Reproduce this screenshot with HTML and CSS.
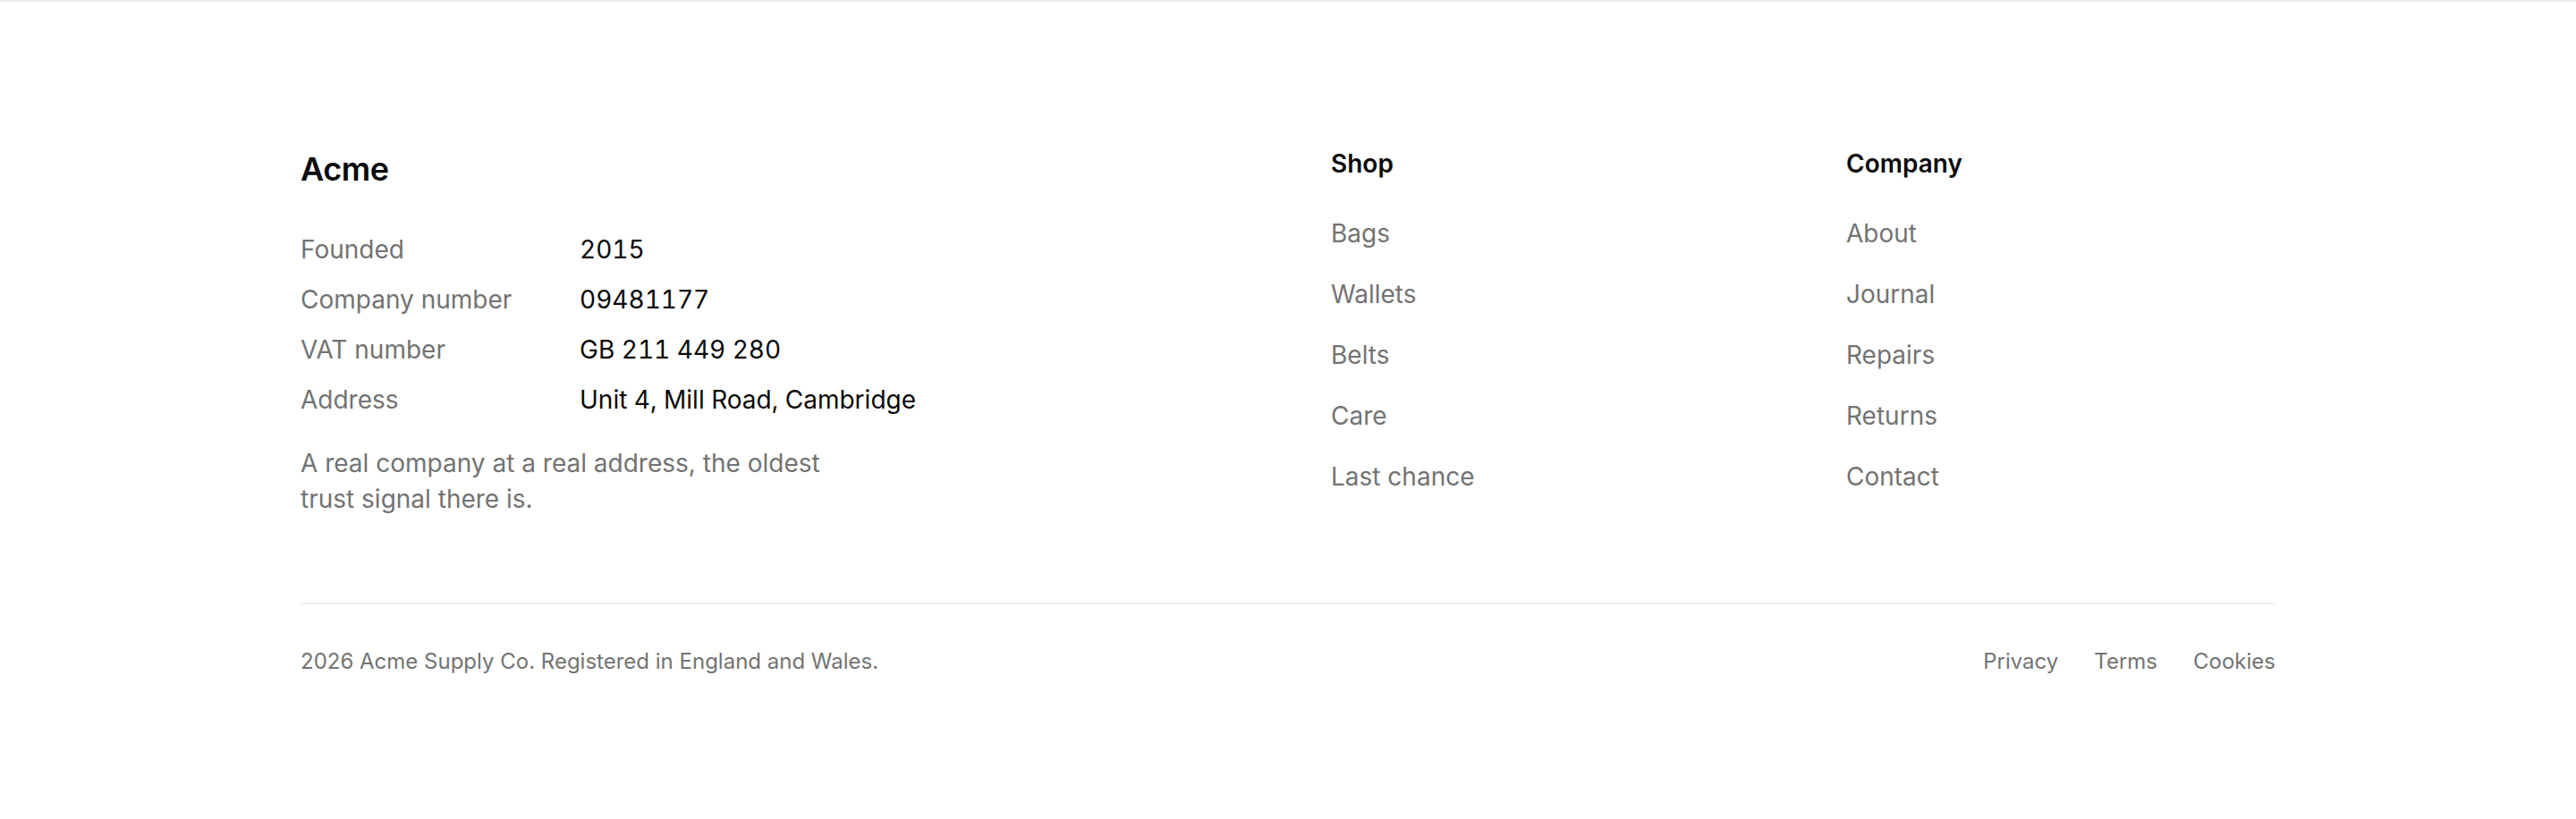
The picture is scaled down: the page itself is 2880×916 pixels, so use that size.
FILE: index.html
```html
<!DOCTYPE html>
<html lang="en">
<head>
<meta charset="utf-8">
<title>Acme footer</title>
<link rel="stylesheet" href="styles.css">
</head>
<body>
<footer class="footer">
  <div class="container">
    <div class="cols">
      <div class="brand">
        <div class="brand-name">Acme</div>
        <dl class="facts">
          <div class="fact"><dt>Founded</dt><dd>2015</dd></div>
          <div class="fact"><dt>Company number</dt><dd>09481177</dd></div>
          <div class="fact"><dt>VAT number</dt><dd>GB 211 449 280</dd></div>
          <div class="fact"><dt>Address</dt><dd>Unit 4, Mill Road, Cambridge</dd></div>
        </dl>
        <p class="blurb">A real company at a real address, the oldest trust signal there is.</p>
      </div>
      <nav class="linkcol">
        <h3 class="col-title">Shop</h3>
        <ul class="links">
          <li><a href="#">Bags</a></li>
          <li><a href="#">Wallets</a></li>
          <li><a href="#">Belts</a></li>
          <li><a href="#">Care</a></li>
          <li><a href="#">Last chance</a></li>
        </ul>
      </nav>
      <nav class="linkcol">
        <h3 class="col-title">Company</h3>
        <ul class="links">
          <li><a href="#">About</a></li>
          <li><a href="#">Journal</a></li>
          <li><a href="#">Repairs</a></li>
          <li><a href="#">Returns</a></li>
          <li><a href="#">Contact</a></li>
        </ul>
      </nav>
    </div>
    <div class="bottom">
      <p class="legal">2026 Acme Supply Co. Registered in England and Wales.</p>
      <div class="legal-links">
        <a href="#">Privacy</a>
        <a href="#">Terms</a>
        <a href="#">Cookies</a>
      </div>
    </div>
  </div>
</footer>
</body>
</html>
```

FILE: styles.css
```css
* { box-sizing: border-box; }

html, body {
  margin: 0;
  padding: 0;
  background: #ffffff;
}

body {
  font-family: Inter, "Noto Sans", "Liberation Sans", sans-serif;
  color: #0a0a0a;
}

.footer {
  border-top: 2px solid #ebebeb;
  padding: 160px 0 120px;
}

.container {
  max-width: 2400px;
  margin: 0 auto;
  padding: 0 96px;
}

.cols {
  display: grid;
  grid-template-columns: repeat(4, minmax(0, 1fr));
  column-gap: 96px;
}

.brand {
  grid-column: span 2;
}

.brand-name {
  font-size: 36px;
  line-height: 54px;
  font-weight: 600;
  letter-spacing: -0.4px;
  color: #0a0a0a;
}

.facts {
  margin: 42px 0 0;
  display: flex;
  flex-direction: column;
  gap: 14px;
}

.fact {
  display: grid;
  grid-template-columns: 312px 1fr;
  font-size: 28px;
  line-height: 42px;
}

.fact dt {
  color: #737373;
}

.fact dd {
  margin: 0;
  color: #0a0a0a;
  font-variant-numeric: tabular-nums;
}

.blurb {
  margin: 30px 0 0;
  max-width: 640px;
  font-size: 28px;
  line-height: 40px;
  color: #737373;
}

.col-title {
  margin: 0;
  font-size: 28px;
  line-height: 42px;
  font-weight: 600;
  color: #0a0a0a;
}

.links {
  list-style: none;
  margin: 36px 0 0;
  padding: 0;
  display: flex;
  flex-direction: column;
  gap: 26px;
}

.links a {
  display: block;
  font-size: 28px;
  line-height: 42px;
  color: #737373;
  text-decoration: none;
}

.bottom {
  margin-top: 96px;
  border-top: 2px solid #ededed;
  padding-top: 46px;
  display: flex;
  justify-content: space-between;
  align-items: baseline;
}

.legal {
  margin: 0;
  font-size: 24px;
  line-height: 36px;
  color: #737373;
}

.legal-links {
  display: flex;
  gap: 40px;
}

.legal-links a {
  font-size: 24px;
  line-height: 36px;
  color: #737373;
  text-decoration: none;
}
```
